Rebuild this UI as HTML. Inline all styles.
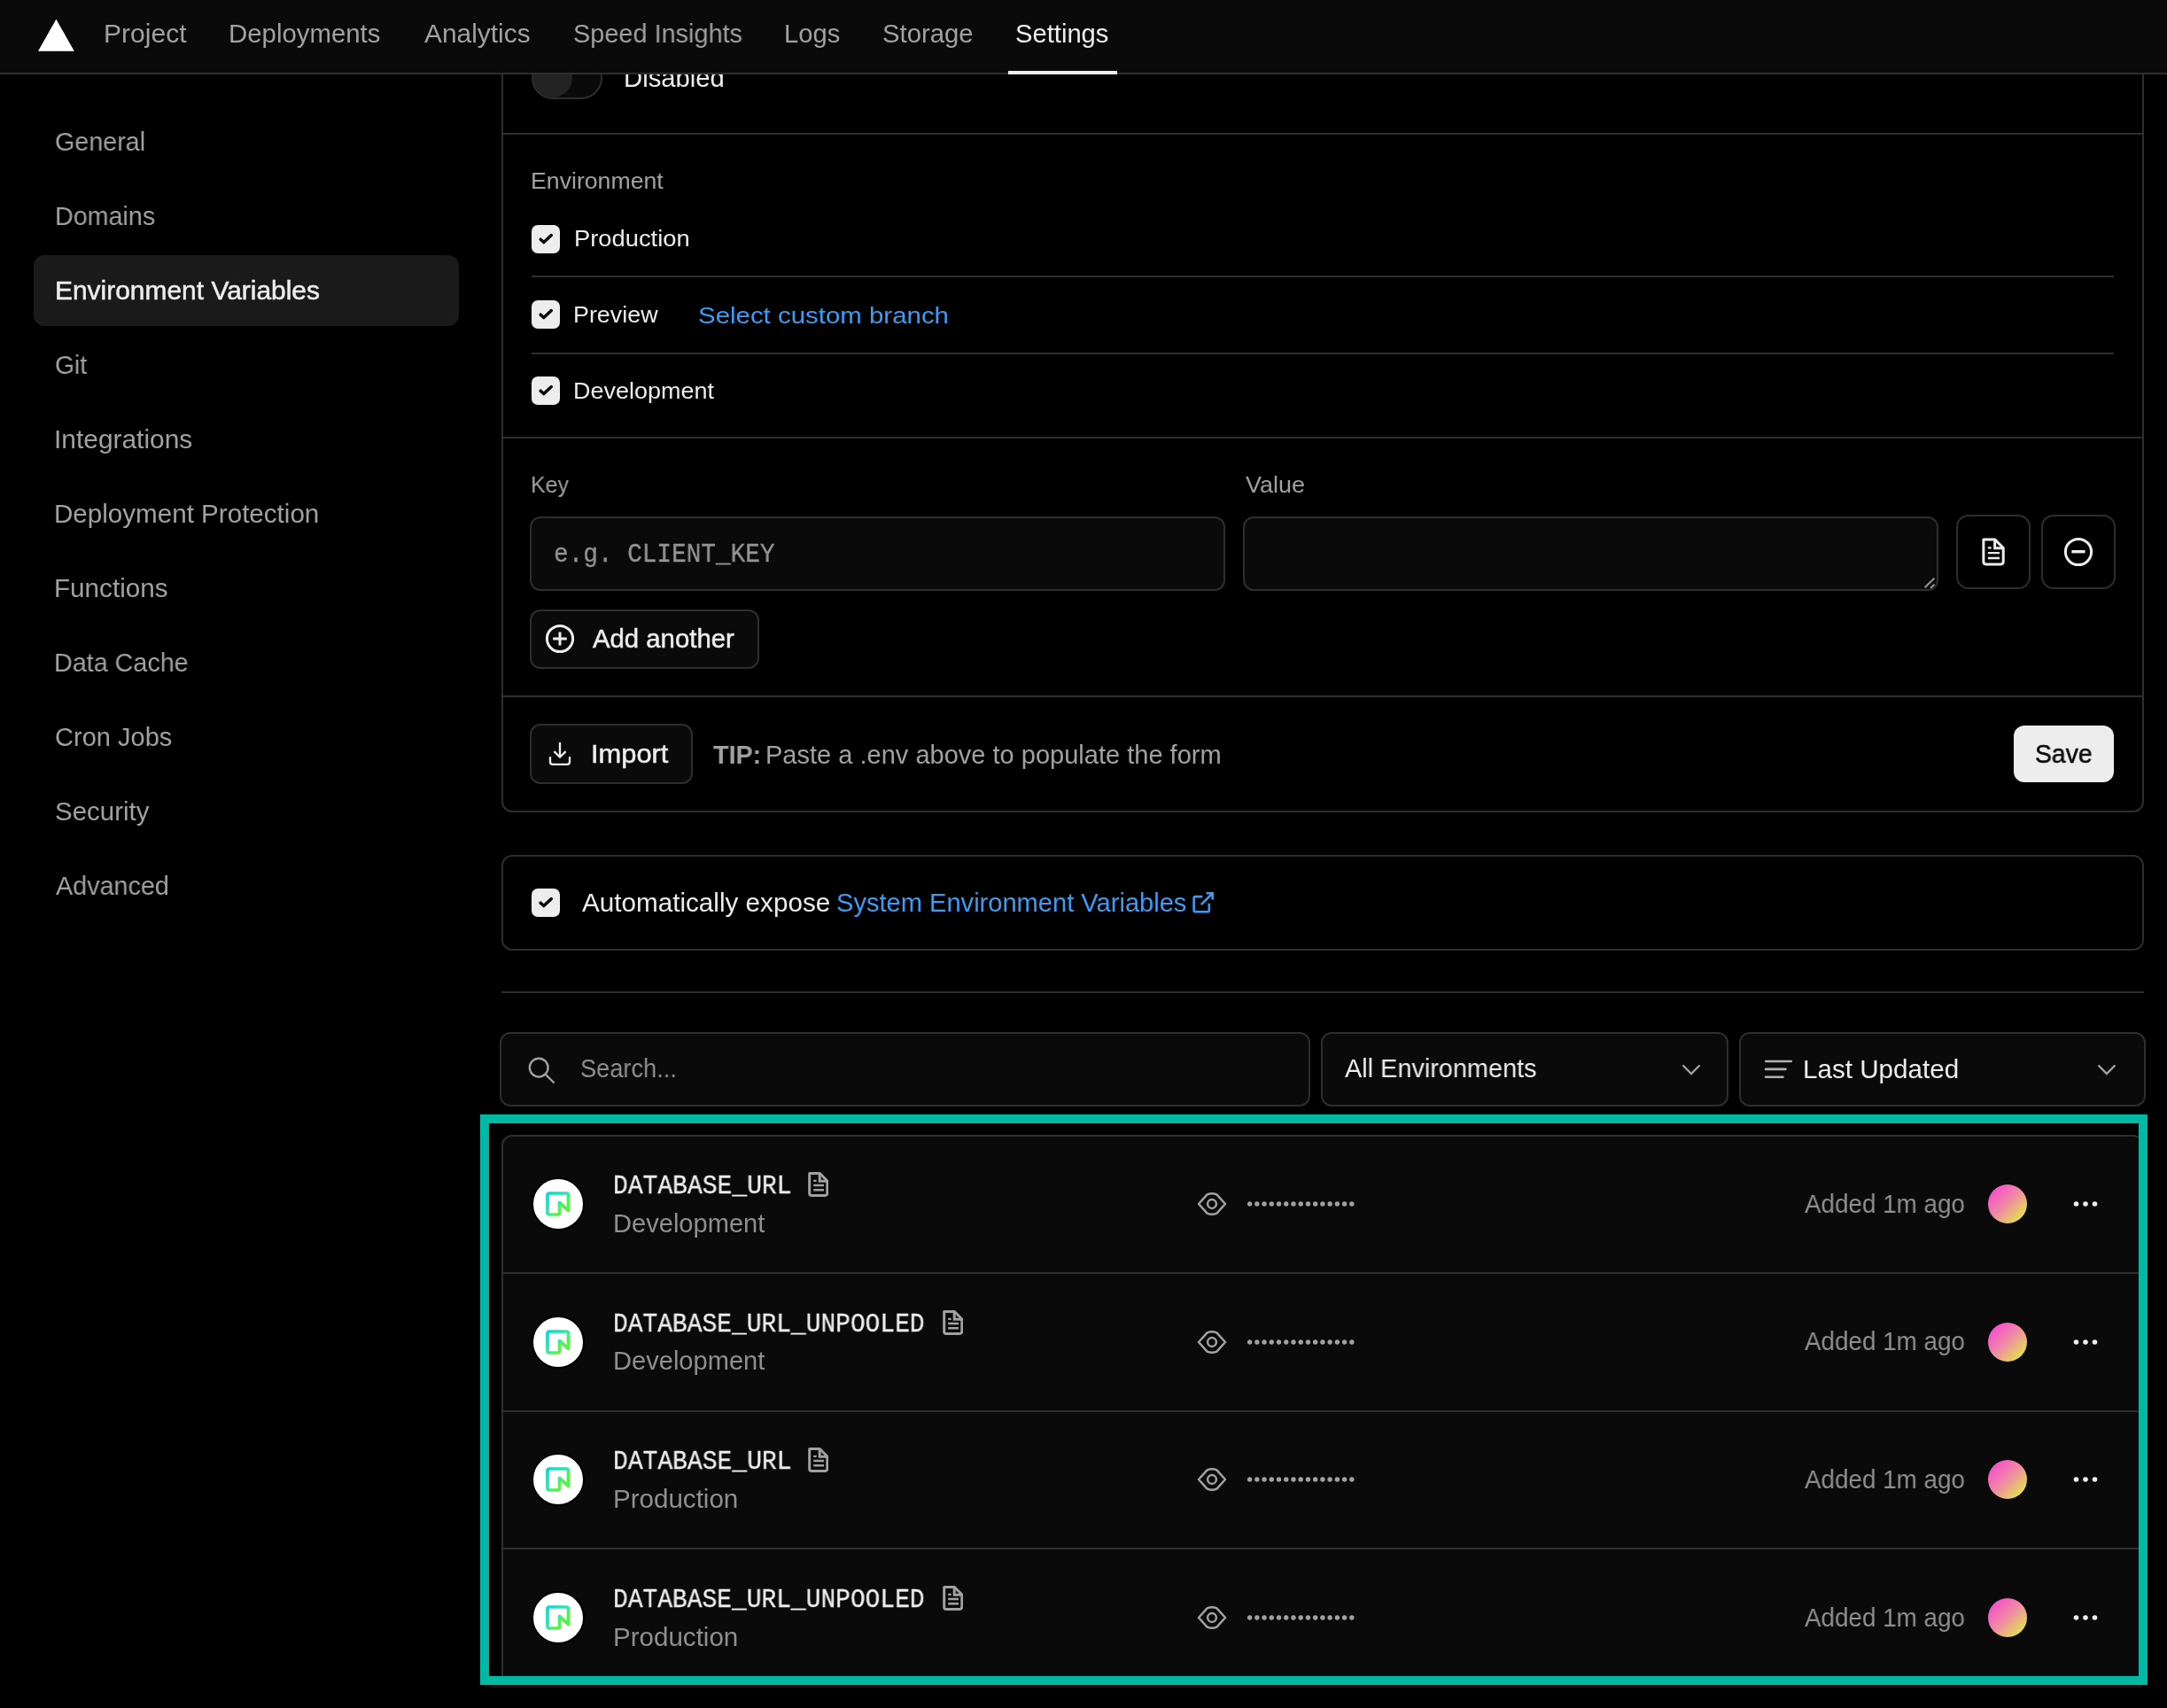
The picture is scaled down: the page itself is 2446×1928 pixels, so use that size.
<!DOCTYPE html>
<html><head><meta charset="utf-8"><style>
*{box-sizing:border-box;margin:0;padding:0}
html,body{width:2446px;height:1928px;overflow:hidden;background:#000;font-family:"Liberation Sans",sans-serif;color:#ededed;-webkit-font-smoothing:antialiased}
.a{position:absolute}
.t{position:absolute;white-space:pre;will-change:transform}
.hr{position:absolute;height:2px;background:#2e2e2e}
.inp{position:absolute;background:#0a0a0a;border:2px solid #2e2e2e;border-radius:12px}
.btn{position:absolute;background:#0a0a0a;border:2px solid #2e2e2e;border-radius:12px}
</style></head><body>
<div class="a" style="left:0;top:0;width:2446px;height:82px;background:#0a0a0a;z-index:10"></div>
<div class="a" style="left:0;top:82px;width:2446px;height:2px;background:#2e2e2e;z-index:10"></div>
<svg class="a" style="left:0;top:0;z-index:11" width="100" height="82"><path d="M63.4 21.7 L83.8 57.8 H43.0 Z" fill="#fff"/></svg>
<div class="t" style='left:116.73px;top:24.00px;font-size:29px;line-height:29px;color:#a1a1a1;letter-spacing:0.000px;transform:scaleX(1.0363);transform-origin:0 0;z-index:11'>Project</div>
<div class="t" style='left:257.97px;top:24.00px;font-size:29px;line-height:29px;color:#a1a1a1;letter-spacing:0.000px;transform:scaleX(1.0129);transform-origin:0 0;z-index:11'>Deployments</div>
<div class="t" style='left:478.70px;top:24.00px;font-size:29px;line-height:29px;color:#a1a1a1;letter-spacing:0.000px;transform:scaleX(1.0308);transform-origin:0 0;z-index:11'>Analytics</div>
<div class="t" style='left:646.70px;top:24.00px;font-size:29px;line-height:29px;color:#a1a1a1;letter-spacing:0.000px;transform:scaleX(0.9960);transform-origin:0 0;z-index:11'>Speed Insights</div>
<div class="t" style='left:884.89px;top:24.00px;font-size:29px;line-height:29px;color:#a1a1a1;letter-spacing:0.000px;transform:scaleX(1.0069);transform-origin:0 0;z-index:11'>Logs</div>
<div class="t" style='left:996.39px;top:24.00px;font-size:29px;line-height:29px;color:#a1a1a1;letter-spacing:0.000px;transform:scaleX(1.0096);transform-origin:0 0;z-index:11'>Storage</div>
<div class="t" style='left:1146.39px;top:24.00px;font-size:29px;line-height:29px;color:#ededed;letter-spacing:0.000px;transform:scaleX(1.0060);transform-origin:0 0;z-index:11'>Settings</div>
<div class="a" style="left:1138px;top:80px;width:123px;height:4px;background:#ededed;z-index:12"></div>
<div class="a" style="left:38px;top:288px;width:480px;height:80px;border-radius:12px;background:#1a1a1a"></div>
<div class="t" style='left:62.01px;top:146.00px;font-size:29px;line-height:29px;color:#a1a1a1;letter-spacing:0.000px;transform:scaleX(0.9898);transform-origin:0 0'>General</div>
<div class="t" style='left:61.52px;top:230.00px;font-size:29px;line-height:29px;color:#a1a1a1;letter-spacing:0.000px;transform:scaleX(0.9890);transform-origin:0 0'>Domains</div>
<div class="t" style='left:61.69px;top:314.00px;font-size:29px;line-height:29px;color:#ededed;letter-spacing:0.000px;transform:scaleX(1.0324);transform-origin:0 0;-webkit-text-stroke:0.5px #ededed'>Environment Variables</div>
<div class="t" style='left:61.73px;top:398.00px;font-size:29px;line-height:29px;color:#a1a1a1;letter-spacing:0.000px;transform:scaleX(0.9750);transform-origin:0 0'>Git</div>
<div class="t" style='left:60.64px;top:482.00px;font-size:29px;line-height:29px;color:#a1a1a1;letter-spacing:0.000px;transform:scaleX(1.0313);transform-origin:0 0'>Integrations</div>
<div class="t" style='left:60.66px;top:566.00px;font-size:29px;line-height:29px;color:#a1a1a1;letter-spacing:0.000px;transform:scaleX(1.0202);transform-origin:0 0'>Deployment Protection</div>
<div class="t" style='left:60.66px;top:650.00px;font-size:29px;line-height:29px;color:#a1a1a1;letter-spacing:0.000px;transform:scaleX(1.0225);transform-origin:0 0'>Functions</div>
<div class="t" style='left:61.12px;top:734.00px;font-size:29px;line-height:29px;color:#a1a1a1;letter-spacing:0.000px;transform:scaleX(0.9899);transform-origin:0 0'>Data Cache</div>
<div class="t" style='left:62.00px;top:818.00px;font-size:29px;line-height:29px;color:#a1a1a1;letter-spacing:0.000px;transform:scaleX(1.0010);transform-origin:0 0'>Cron Jobs</div>
<div class="t" style='left:61.98px;top:902.00px;font-size:29px;line-height:29px;color:#a1a1a1;letter-spacing:0.000px;transform:scaleX(1.0158);transform-origin:0 0'>Security</div>
<div class="t" style='left:63.00px;top:986.00px;font-size:29px;line-height:29px;color:#a1a1a1;letter-spacing:0.000px;transform:scaleX(0.9917);transform-origin:0 0'>Advanced</div>
<div class="a" style="left:566px;top:-40px;width:1854px;height:957px;border:2px solid #2e2e2e;border-radius:12px"></div>
<div class="a" style="left:600px;top:64px;width:80px;height:48px;border-radius:24px;background:#0a0a0a;border:2px solid #2e2e2e"></div>
<div class="a" style="left:602px;top:66px;width:44px;height:44px;border-radius:22px;background:#232323"></div>
<div class="t" style='left:703.78px;top:74.00px;font-size:29px;line-height:29px;color:#ededed;letter-spacing:0.000px;transform:scaleX(1.0090);transform-origin:0 0'>Disabled</div>
<div class="hr" style="left:568px;top:150px;width:1850px"></div>
<div class="t" style='left:599.45px;top:191.00px;font-size:26px;line-height:26px;color:#a1a1a1;letter-spacing:0.000px;transform:scaleX(1.0260);transform-origin:0 0'>Environment</div>
<div class="a" style="left:600px;top:254px;width:32px;height:32px;border-radius:7px;background:#ededed"><svg width="32" height="32" viewBox="0 0 32 32"><path d="M10.2 16.2 L13.8 19.6 L22.3 11.6" fill="none" stroke="#0a0a0a" stroke-width="3.5" stroke-linecap="round" stroke-linejoin="round"/></svg></div>
<div class="a" style="left:600px;top:339px;width:32px;height:32px;border-radius:7px;background:#ededed"><svg width="32" height="32" viewBox="0 0 32 32"><path d="M10.2 16.2 L13.8 19.6 L22.3 11.6" fill="none" stroke="#0a0a0a" stroke-width="3.5" stroke-linecap="round" stroke-linejoin="round"/></svg></div>
<div class="a" style="left:600px;top:425px;width:32px;height:32px;border-radius:7px;background:#ededed"><svg width="32" height="32" viewBox="0 0 32 32"><path d="M10.2 16.2 L13.8 19.6 L22.3 11.6" fill="none" stroke="#0a0a0a" stroke-width="3.5" stroke-linecap="round" stroke-linejoin="round"/></svg></div>
<div class="t" style='left:647.90px;top:256.00px;font-size:26px;line-height:26px;color:#ededed;letter-spacing:0.000px;transform:scaleX(1.0510);transform-origin:0 0'>Production</div>
<div class="t" style='left:646.93px;top:342.00px;font-size:26px;line-height:26px;color:#ededed;letter-spacing:0.000px;transform:scaleX(1.0331);transform-origin:0 0'>Preview</div>
<div class="t" style='left:787.67px;top:343.00px;font-size:26px;line-height:26px;color:#3b9cf5;letter-spacing:0.000px;transform:scaleX(1.1319);transform-origin:0 0'>Select custom branch</div>
<div class="t" style='left:646.92px;top:428.00px;font-size:26px;line-height:26px;color:#ededed;letter-spacing:0.000px;transform:scaleX(1.0384);transform-origin:0 0'>Development</div>
<div class="hr" style="left:600px;top:311px;width:1786px"></div>
<div class="hr" style="left:600px;top:398px;width:1786px"></div>
<div class="hr" style="left:568px;top:493px;width:1850px"></div>
<div class="t" style='left:599.38px;top:534.00px;font-size:26px;line-height:26px;color:#a1a1a1;letter-spacing:0.000px;transform:scaleX(0.9602);transform-origin:0 0'>Key</div>
<div class="t" style='left:1405.60px;top:534.00px;font-size:26px;line-height:26px;color:#a1a1a1;letter-spacing:0.000px;transform:scaleX(1.0357);transform-origin:0 0'>Value</div>
<div class="inp" style="left:598px;top:583px;width:785px;height:84px"></div>
<div class="t" style='left:624.93px;top:611.00px;font-size:30px;line-height:30px;color:#959595;letter-spacing:0.000px;transform:scaleX(0.9240);transform-origin:0 0;font-family:"Liberation Mono";-webkit-text-stroke:0.3px #959595'>e.g. CLIENT_KEY</div>
<div class="inp" style="left:1403px;top:583px;width:785px;height:84px"></div>
<svg class="a" style="left:2160px;top:640px" width="30" height="30"><path d="M12.6 23.2 L23.4 12.6 M19.2 23.8 L23.4 19.6" stroke="#9a9a9a" stroke-width="2" fill="none"/></svg>
<div class="a" style="left:2208px;top:581px;width:84px;height:84px;border:2px solid #2e2e2e;border-radius:14px"></div>
<div class="a" style="left:2304px;top:581px;width:84px;height:84px;border:2px solid #2e2e2e;border-radius:14px"></div>
<svg class="a" style="left:2237px;top:607px" width="26" height="32" viewBox="0 0 23.4 28"><path d="M1.7 1.5 H13.4 L21.8 10 V24 Q21.8 26.5 19.3 26.5 H4.2 Q1.7 26.5 1.7 24 Z" fill="none" stroke="#ededed" stroke-width="2.7" stroke-linejoin="round"/><path d="M13.2 1.5 V10.2 H21.8" fill="none" stroke="#ededed" stroke-width="2.7"/><path d="M6.2 9.9 H9.6 M6.2 15 H18 M6.2 20.3 H18" stroke="#ededed" stroke-width="2.1"/></svg>
<svg class="a" style="left:2322px;top:599px" width="48" height="48"><circle cx="24" cy="24" r="14.6" fill="none" stroke="#ededed" stroke-width="3"/><path d="M16.4 23.7 H31.5" stroke="#ededed" stroke-width="3.4"/></svg>
<div class="btn" style="left:598px;top:688px;width:259px;height:67px"></div>
<svg class="a" style="left:608px;top:697px" width="48" height="48"><circle cx="24" cy="24" r="14.6" fill="none" stroke="#ededed" stroke-width="3"/><path d="M16.2 24 H31.8 M24 16.4 V31.6" stroke="#ededed" stroke-width="3"/></svg>
<div class="t" style='left:669.25px;top:707.00px;font-size:29px;line-height:29px;color:#ededed;letter-spacing:0.000px;transform:scaleX(1.0110);transform-origin:0 0;-webkit-text-stroke:0.5px #ededed'>Add another</div>
<div class="hr" style="left:568px;top:785px;width:1850px"></div>
<div class="btn" style="left:598px;top:817px;width:184px;height:68px"></div>
<svg class="a" style="left:608px;top:827px" width="48" height="48"><path d="M24 11 V27.8 M17.4 21.1 L24 27.7 L30.6 21.1" fill="none" stroke="#ededed" stroke-width="2.3" stroke-linejoin="round"/><path d="M13 27.3 V33 Q13 35.8 15.8 35.8 H32.2 Q35 35.8 35 33 V27.3" fill="none" stroke="#ededed" stroke-width="2.3"/></svg>
<div class="t" style='left:667.42px;top:837.00px;font-size:29px;line-height:29px;color:#ededed;letter-spacing:0.000px;transform:scaleX(1.0633);transform-origin:0 0;-webkit-text-stroke:0.5px #ededed'>Import</div>
<div class="t" style='left:804.60px;top:838.00px;font-size:29px;line-height:29px;color:#a1a1a1;letter-spacing:0.000px;transform:scaleX(0.9901);transform-origin:0 0;font-weight:700'>TIP:</div>
<div class="t" style='left:863.50px;top:838.00px;font-size:29px;line-height:29px;color:#a1a1a1;letter-spacing:0.000px;transform:scaleX(1.0007);transform-origin:0 0'>Paste a .env above to populate the form</div>
<div class="a" style="left:2273px;top:819px;width:113px;height:64px;border-radius:12px;background:#ededed"></div>
<div class="t" style='left:2297.27px;top:837.00px;font-size:29px;line-height:29px;color:#0a0a0a;letter-spacing:0.000px;transform:scaleX(0.9770);transform-origin:0 0;-webkit-text-stroke:0.5px #0a0a0a'>Save</div>
<div class="a" style="left:566px;top:965px;width:1854px;height:108px;border:2px solid #2e2e2e;border-radius:12px"></div>
<div class="a" style="left:600px;top:1003px;width:32px;height:32px;border-radius:7px;background:#ededed"><svg width="32" height="32" viewBox="0 0 32 32"><path d="M10.2 16.2 L13.8 19.6 L22.3 11.6" fill="none" stroke="#0a0a0a" stroke-width="3.5" stroke-linecap="round" stroke-linejoin="round"/></svg></div>
<div class="t" style='left:656.50px;top:1005.00px;font-size:29px;line-height:29px;color:#ededed;letter-spacing:0.000px;transform:scaleX(1.0227);transform-origin:0 0'>Automatically expose</div>
<div class="t" style='left:943.50px;top:1005.00px;font-size:29px;line-height:29px;color:#3b9cf5;letter-spacing:0.000px;transform:scaleX(1.0027);transform-origin:0 0'>System Environment Variables</div>
<svg class="a" style="left:1340px;top:1000px" width="36" height="36"><path d="M17.2 12.1 H9.4 Q7.6 12.1 7.6 13.9 V27.5 Q7.6 29.3 9.4 29.3 H23 Q24.8 29.3 24.8 27.5 V19.8" fill="none" stroke="#3b9cf5" stroke-width="2.6"/><path d="M15.8 21.2 L28.5 8.5 M21.6 8.3 H28.7 V15.4" fill="none" stroke="#3b9cf5" stroke-width="2.6"/></svg>
<div class="hr" style="left:566px;top:1119px;width:1854px"></div>
<div class="inp" style="left:564px;top:1165px;width:915px;height:84px"></div>
<svg class="a" style="left:590px;top:1187px" width="40" height="40"><circle cx="18.2" cy="18.1" r="10.4" fill="none" stroke="#a1a1a1" stroke-width="2.4"/><path d="M26 26 L35.5 35.5" stroke="#a1a1a1" stroke-width="2.4"/></svg>
<div class="t" style='left:654.56px;top:1192.00px;font-size:29px;line-height:29px;color:#8f8f8f;letter-spacing:0.000px;transform:scaleX(0.9381);transform-origin:0 0'>Search...</div>
<div class="inp" style="left:1491px;top:1165px;width:460px;height:84px"></div>
<div class="t" style='left:1517.90px;top:1192.00px;font-size:29px;line-height:29px;color:#ededed;letter-spacing:0.000px;transform:scaleX(0.9955);transform-origin:0 0'>All Environments</div>
<svg class="a" style="left:1898px;top:1201px" width="22" height="14"><path d="M1.5 1.5 L11 11 L20.5 1.5" fill="none" stroke="#a1a1a1" stroke-width="2.4"/></svg>
<div class="inp" style="left:1963px;top:1165px;width:459px;height:84px"></div>
<svg class="a" style="left:1988px;top:1192px" width="40" height="30"><path d="M5.2 6 H33.8 M5 14.9 H27.5 M5 23.7 H24.5" stroke="#b0b0b0" stroke-width="2.6" stroke-linecap="round"/></svg>
<div class="t" style='left:2035.26px;top:1193.00px;font-size:29px;line-height:29px;color:#ededed;letter-spacing:0.000px;transform:scaleX(1.0213);transform-origin:0 0'>Last Updated</div>
<svg class="a" style="left:2367px;top:1201px" width="22" height="14"><path d="M1.5 1.5 L11 11 L20.5 1.5" fill="none" stroke="#a1a1a1" stroke-width="2.4"/></svg>
<div class="a" style="left:566px;top:1281px;width:1854px;height:640px;border:2px solid #2e2e2e;border-radius:12px;background:#0a0a0a"></div>
<svg width="0" height="0" style="position:absolute"><defs><linearGradient id="ng" x1="0" y1="0" x2="1" y2="1"><stop offset="0" stop-color="#00dcd8"/><stop offset="0.55" stop-color="#3ee8a0"/><stop offset="0.6" stop-color="#55f24e"/><stop offset="1" stop-color="#5cf04a"/></linearGradient><linearGradient id="av" x1="0.12" y1="0.12" x2="0.88" y2="0.88"><stop offset="0" stop-color="#f64ecd"/><stop offset="0.5" stop-color="#ee8ea2"/><stop offset="1" stop-color="#e2e54a"/></linearGradient></defs></svg>
<div class="hr" style="left:568px;top:1436px;width:1850px"></div>
<div class="a" style="left:600px;top:1329.0px;width:60px;height:60px;border-radius:30px;background:#ffffff;border:2px solid #000"></div>
<svg class="a" style="left:616px;top:1345.0px" width="28" height="28" viewBox="0 0 28 28"><path d="M25.5 21.3 V4.2 Q25.5 2 23.3 2 H4.2 Q2 2 2 4.2 V23.8 Q2 26 4.2 26 H13.3 Q15.5 26 15.5 23.8 V12.5 L25.5 21.3" fill="none" stroke="url(#ng)" stroke-width="3.7" stroke-linecap="round" stroke-linejoin="round"/></svg>
<div class="t" style='left:691.82px;top:1325.00px;font-size:29px;line-height:29px;color:#ededed;letter-spacing:0.000px;transform:scaleX(0.9648);transform-origin:0 0;font-family:"Liberation Mono";-webkit-text-stroke:0.3px #ededed'>DATABASE_URL</div>
<svg class="a" style="left:912px;top:1323.0px" width="23.4" height="28" viewBox="0 0 23.4 28"><path d="M1.7 1.5 H13.4 L21.8 10 V24 Q21.8 26.5 19.3 26.5 H4.2 Q1.7 26.5 1.7 24 Z" fill="none" stroke="#a1a1a1" stroke-width="3" stroke-linejoin="round"/><path d="M13.2 1.5 V10.2 H21.8" fill="none" stroke="#a1a1a1" stroke-width="3"/><path d="M6.2 9.9 H9.6 M6.2 15 H18 M6.2 20.3 H18" stroke="#a1a1a1" stroke-width="2.4"/></svg>
<div class="t" style='left:691.89px;top:1367.00px;font-size:29px;line-height:29px;color:#8f8f8f;letter-spacing:0.000px;transform:scaleX(1.0029);transform-origin:0 0'>Development</div>
<svg class="a" style="left:1350px;top:1344.0px" width="36" height="30" viewBox="0 0 36 30"><path d="M3 15 L12.6 4.3 Q18 2.1 23.4 4.3 L33 15 L23.4 25.7 Q18 27.9 12.6 25.7 Z" fill="none" stroke="#a1a1a1" stroke-width="2.5" stroke-linejoin="round"/><circle cx="18" cy="15" r="4.9" fill="none" stroke="#a1a1a1" stroke-width="2.5"/></svg>
<svg class="a" style="left:1407.5px;top:1355.4px" width="125" height="8"><circle cx="2.60" cy="4" r="2.7" fill="#a1a1a1"/><circle cx="10.83" cy="4" r="2.7" fill="#a1a1a1"/><circle cx="19.06" cy="4" r="2.7" fill="#a1a1a1"/><circle cx="27.29" cy="4" r="2.7" fill="#a1a1a1"/><circle cx="35.52" cy="4" r="2.7" fill="#a1a1a1"/><circle cx="43.75" cy="4" r="2.7" fill="#a1a1a1"/><circle cx="51.98" cy="4" r="2.7" fill="#a1a1a1"/><circle cx="60.21" cy="4" r="2.7" fill="#a1a1a1"/><circle cx="68.44" cy="4" r="2.7" fill="#a1a1a1"/><circle cx="76.67" cy="4" r="2.7" fill="#a1a1a1"/><circle cx="84.90" cy="4" r="2.7" fill="#a1a1a1"/><circle cx="93.13" cy="4" r="2.7" fill="#a1a1a1"/><circle cx="101.36" cy="4" r="2.7" fill="#a1a1a1"/><circle cx="109.59" cy="4" r="2.7" fill="#a1a1a1"/><circle cx="117.82" cy="4" r="2.7" fill="#a1a1a1"/></svg>
<div class="t" style='left:2037.00px;top:1345.00px;font-size:29px;line-height:29px;color:#8f8f8f;letter-spacing:0.000px;transform:scaleX(0.9589);transform-origin:0 0'>Added 1m ago</div>
<svg class="a" style="left:2243px;top:1336.0px" width="46" height="46"><circle cx="23" cy="23" r="22" fill="url(#av)"/></svg>
<svg class="a" style="left:2336px;top:1351.0px" width="36" height="16"><circle cx="7.5" cy="8" r="2.8" fill="#ededed"/><circle cx="18" cy="8" r="2.8" fill="#ededed"/><circle cx="28.5" cy="8" r="2.8" fill="#ededed"/></svg>
<div class="hr" style="left:568px;top:1592px;width:1850px"></div>
<div class="a" style="left:600px;top:1484.5px;width:60px;height:60px;border-radius:30px;background:#ffffff;border:2px solid #000"></div>
<svg class="a" style="left:616px;top:1500.5px" width="28" height="28" viewBox="0 0 28 28"><path d="M25.5 21.3 V4.2 Q25.5 2 23.3 2 H4.2 Q2 2 2 4.2 V23.8 Q2 26 4.2 26 H13.3 Q15.5 26 15.5 23.8 V12.5 L25.5 21.3" fill="none" stroke="url(#ng)" stroke-width="3.7" stroke-linecap="round" stroke-linejoin="round"/></svg>
<div class="t" style='left:691.83px;top:1481.00px;font-size:29px;line-height:29px;color:#ededed;letter-spacing:0.000px;transform:scaleX(0.9621);transform-origin:0 0;font-family:"Liberation Mono";-webkit-text-stroke:0.3px #ededed'>DATABASE_URL_UNPOOLED</div>
<svg class="a" style="left:1063.5px;top:1478.5px" width="23.4" height="28" viewBox="0 0 23.4 28"><path d="M1.7 1.5 H13.4 L21.8 10 V24 Q21.8 26.5 19.3 26.5 H4.2 Q1.7 26.5 1.7 24 Z" fill="none" stroke="#a1a1a1" stroke-width="3" stroke-linejoin="round"/><path d="M13.2 1.5 V10.2 H21.8" fill="none" stroke="#a1a1a1" stroke-width="3"/><path d="M6.2 9.9 H9.6 M6.2 15 H18 M6.2 20.3 H18" stroke="#a1a1a1" stroke-width="2.4"/></svg>
<div class="t" style='left:691.89px;top:1522.00px;font-size:29px;line-height:29px;color:#8f8f8f;letter-spacing:0.000px;transform:scaleX(1.0029);transform-origin:0 0'>Development</div>
<svg class="a" style="left:1350px;top:1499.5px" width="36" height="30" viewBox="0 0 36 30"><path d="M3 15 L12.6 4.3 Q18 2.1 23.4 4.3 L33 15 L23.4 25.7 Q18 27.9 12.6 25.7 Z" fill="none" stroke="#a1a1a1" stroke-width="2.5" stroke-linejoin="round"/><circle cx="18" cy="15" r="4.9" fill="none" stroke="#a1a1a1" stroke-width="2.5"/></svg>
<svg class="a" style="left:1407.5px;top:1510.9px" width="125" height="8"><circle cx="2.60" cy="4" r="2.7" fill="#a1a1a1"/><circle cx="10.83" cy="4" r="2.7" fill="#a1a1a1"/><circle cx="19.06" cy="4" r="2.7" fill="#a1a1a1"/><circle cx="27.29" cy="4" r="2.7" fill="#a1a1a1"/><circle cx="35.52" cy="4" r="2.7" fill="#a1a1a1"/><circle cx="43.75" cy="4" r="2.7" fill="#a1a1a1"/><circle cx="51.98" cy="4" r="2.7" fill="#a1a1a1"/><circle cx="60.21" cy="4" r="2.7" fill="#a1a1a1"/><circle cx="68.44" cy="4" r="2.7" fill="#a1a1a1"/><circle cx="76.67" cy="4" r="2.7" fill="#a1a1a1"/><circle cx="84.90" cy="4" r="2.7" fill="#a1a1a1"/><circle cx="93.13" cy="4" r="2.7" fill="#a1a1a1"/><circle cx="101.36" cy="4" r="2.7" fill="#a1a1a1"/><circle cx="109.59" cy="4" r="2.7" fill="#a1a1a1"/><circle cx="117.82" cy="4" r="2.7" fill="#a1a1a1"/></svg>
<div class="t" style='left:2037.00px;top:1500.00px;font-size:29px;line-height:29px;color:#8f8f8f;letter-spacing:0.000px;transform:scaleX(0.9589);transform-origin:0 0'>Added 1m ago</div>
<svg class="a" style="left:2243px;top:1491.5px" width="46" height="46"><circle cx="23" cy="23" r="22" fill="url(#av)"/></svg>
<svg class="a" style="left:2336px;top:1506.5px" width="36" height="16"><circle cx="7.5" cy="8" r="2.8" fill="#ededed"/><circle cx="18" cy="8" r="2.8" fill="#ededed"/><circle cx="28.5" cy="8" r="2.8" fill="#ededed"/></svg>
<div class="hr" style="left:568px;top:1747px;width:1850px"></div>
<div class="a" style="left:600px;top:1640.0px;width:60px;height:60px;border-radius:30px;background:#ffffff;border:2px solid #000"></div>
<svg class="a" style="left:616px;top:1656.0px" width="28" height="28" viewBox="0 0 28 28"><path d="M25.5 21.3 V4.2 Q25.5 2 23.3 2 H4.2 Q2 2 2 4.2 V23.8 Q2 26 4.2 26 H13.3 Q15.5 26 15.5 23.8 V12.5 L25.5 21.3" fill="none" stroke="url(#ng)" stroke-width="3.7" stroke-linecap="round" stroke-linejoin="round"/></svg>
<div class="t" style='left:691.82px;top:1636.00px;font-size:29px;line-height:29px;color:#ededed;letter-spacing:0.000px;transform:scaleX(0.9648);transform-origin:0 0;font-family:"Liberation Mono";-webkit-text-stroke:0.3px #ededed'>DATABASE_URL</div>
<svg class="a" style="left:912px;top:1634.0px" width="23.4" height="28" viewBox="0 0 23.4 28"><path d="M1.7 1.5 H13.4 L21.8 10 V24 Q21.8 26.5 19.3 26.5 H4.2 Q1.7 26.5 1.7 24 Z" fill="none" stroke="#a1a1a1" stroke-width="3" stroke-linejoin="round"/><path d="M13.2 1.5 V10.2 H21.8" fill="none" stroke="#a1a1a1" stroke-width="3"/><path d="M6.2 9.9 H9.6 M6.2 15 H18 M6.2 20.3 H18" stroke="#a1a1a1" stroke-width="2.4"/></svg>
<div class="t" style='left:691.86px;top:1678.00px;font-size:29px;line-height:29px;color:#8f8f8f;letter-spacing:0.000px;transform:scaleX(1.0191);transform-origin:0 0'>Production</div>
<svg class="a" style="left:1350px;top:1655.0px" width="36" height="30" viewBox="0 0 36 30"><path d="M3 15 L12.6 4.3 Q18 2.1 23.4 4.3 L33 15 L23.4 25.7 Q18 27.9 12.6 25.7 Z" fill="none" stroke="#a1a1a1" stroke-width="2.5" stroke-linejoin="round"/><circle cx="18" cy="15" r="4.9" fill="none" stroke="#a1a1a1" stroke-width="2.5"/></svg>
<svg class="a" style="left:1407.5px;top:1666.4px" width="125" height="8"><circle cx="2.60" cy="4" r="2.7" fill="#a1a1a1"/><circle cx="10.83" cy="4" r="2.7" fill="#a1a1a1"/><circle cx="19.06" cy="4" r="2.7" fill="#a1a1a1"/><circle cx="27.29" cy="4" r="2.7" fill="#a1a1a1"/><circle cx="35.52" cy="4" r="2.7" fill="#a1a1a1"/><circle cx="43.75" cy="4" r="2.7" fill="#a1a1a1"/><circle cx="51.98" cy="4" r="2.7" fill="#a1a1a1"/><circle cx="60.21" cy="4" r="2.7" fill="#a1a1a1"/><circle cx="68.44" cy="4" r="2.7" fill="#a1a1a1"/><circle cx="76.67" cy="4" r="2.7" fill="#a1a1a1"/><circle cx="84.90" cy="4" r="2.7" fill="#a1a1a1"/><circle cx="93.13" cy="4" r="2.7" fill="#a1a1a1"/><circle cx="101.36" cy="4" r="2.7" fill="#a1a1a1"/><circle cx="109.59" cy="4" r="2.7" fill="#a1a1a1"/><circle cx="117.82" cy="4" r="2.7" fill="#a1a1a1"/></svg>
<div class="t" style='left:2037.00px;top:1656.00px;font-size:29px;line-height:29px;color:#8f8f8f;letter-spacing:0.000px;transform:scaleX(0.9589);transform-origin:0 0'>Added 1m ago</div>
<svg class="a" style="left:2243px;top:1647.0px" width="46" height="46"><circle cx="23" cy="23" r="22" fill="url(#av)"/></svg>
<svg class="a" style="left:2336px;top:1662.0px" width="36" height="16"><circle cx="7.5" cy="8" r="2.8" fill="#ededed"/><circle cx="18" cy="8" r="2.8" fill="#ededed"/><circle cx="28.5" cy="8" r="2.8" fill="#ededed"/></svg>
<div class="a" style="left:600px;top:1795.5px;width:60px;height:60px;border-radius:30px;background:#ffffff;border:2px solid #000"></div>
<svg class="a" style="left:616px;top:1811.5px" width="28" height="28" viewBox="0 0 28 28"><path d="M25.5 21.3 V4.2 Q25.5 2 23.3 2 H4.2 Q2 2 2 4.2 V23.8 Q2 26 4.2 26 H13.3 Q15.5 26 15.5 23.8 V12.5 L25.5 21.3" fill="none" stroke="url(#ng)" stroke-width="3.7" stroke-linecap="round" stroke-linejoin="round"/></svg>
<div class="t" style='left:691.83px;top:1792.00px;font-size:29px;line-height:29px;color:#ededed;letter-spacing:0.000px;transform:scaleX(0.9621);transform-origin:0 0;font-family:"Liberation Mono";-webkit-text-stroke:0.3px #ededed'>DATABASE_URL_UNPOOLED</div>
<svg class="a" style="left:1063.5px;top:1789.5px" width="23.4" height="28" viewBox="0 0 23.4 28"><path d="M1.7 1.5 H13.4 L21.8 10 V24 Q21.8 26.5 19.3 26.5 H4.2 Q1.7 26.5 1.7 24 Z" fill="none" stroke="#a1a1a1" stroke-width="3" stroke-linejoin="round"/><path d="M13.2 1.5 V10.2 H21.8" fill="none" stroke="#a1a1a1" stroke-width="3"/><path d="M6.2 9.9 H9.6 M6.2 15 H18 M6.2 20.3 H18" stroke="#a1a1a1" stroke-width="2.4"/></svg>
<div class="t" style='left:691.86px;top:1834.00px;font-size:29px;line-height:29px;color:#8f8f8f;letter-spacing:0.000px;transform:scaleX(1.0191);transform-origin:0 0'>Production</div>
<svg class="a" style="left:1350px;top:1810.5px" width="36" height="30" viewBox="0 0 36 30"><path d="M3 15 L12.6 4.3 Q18 2.1 23.4 4.3 L33 15 L23.4 25.7 Q18 27.9 12.6 25.7 Z" fill="none" stroke="#a1a1a1" stroke-width="2.5" stroke-linejoin="round"/><circle cx="18" cy="15" r="4.9" fill="none" stroke="#a1a1a1" stroke-width="2.5"/></svg>
<svg class="a" style="left:1407.5px;top:1821.9px" width="125" height="8"><circle cx="2.60" cy="4" r="2.7" fill="#a1a1a1"/><circle cx="10.83" cy="4" r="2.7" fill="#a1a1a1"/><circle cx="19.06" cy="4" r="2.7" fill="#a1a1a1"/><circle cx="27.29" cy="4" r="2.7" fill="#a1a1a1"/><circle cx="35.52" cy="4" r="2.7" fill="#a1a1a1"/><circle cx="43.75" cy="4" r="2.7" fill="#a1a1a1"/><circle cx="51.98" cy="4" r="2.7" fill="#a1a1a1"/><circle cx="60.21" cy="4" r="2.7" fill="#a1a1a1"/><circle cx="68.44" cy="4" r="2.7" fill="#a1a1a1"/><circle cx="76.67" cy="4" r="2.7" fill="#a1a1a1"/><circle cx="84.90" cy="4" r="2.7" fill="#a1a1a1"/><circle cx="93.13" cy="4" r="2.7" fill="#a1a1a1"/><circle cx="101.36" cy="4" r="2.7" fill="#a1a1a1"/><circle cx="109.59" cy="4" r="2.7" fill="#a1a1a1"/><circle cx="117.82" cy="4" r="2.7" fill="#a1a1a1"/></svg>
<div class="t" style='left:2037.00px;top:1812.00px;font-size:29px;line-height:29px;color:#8f8f8f;letter-spacing:0.000px;transform:scaleX(0.9589);transform-origin:0 0'>Added 1m ago</div>
<svg class="a" style="left:2243px;top:1802.5px" width="46" height="46"><circle cx="23" cy="23" r="22" fill="url(#av)"/></svg>
<svg class="a" style="left:2336px;top:1817.5px" width="36" height="16"><circle cx="7.5" cy="8" r="2.8" fill="#ededed"/><circle cx="18" cy="8" r="2.8" fill="#ededed"/><circle cx="28.5" cy="8" r="2.8" fill="#ededed"/></svg>
<div class="a" style="left:542px;top:1258px;width:1882px;height:644px;border:10px solid #00b9a5;z-index:20"></div>
<div class="a" style="left:542px;top:1902px;width:1904px;height:30px;background:#000;z-index:19"></div>
<div class="a" style="left:552px;top:1903px;width:1866px;height:2px;background:#161616;z-index:21"></div>
</body></html>
